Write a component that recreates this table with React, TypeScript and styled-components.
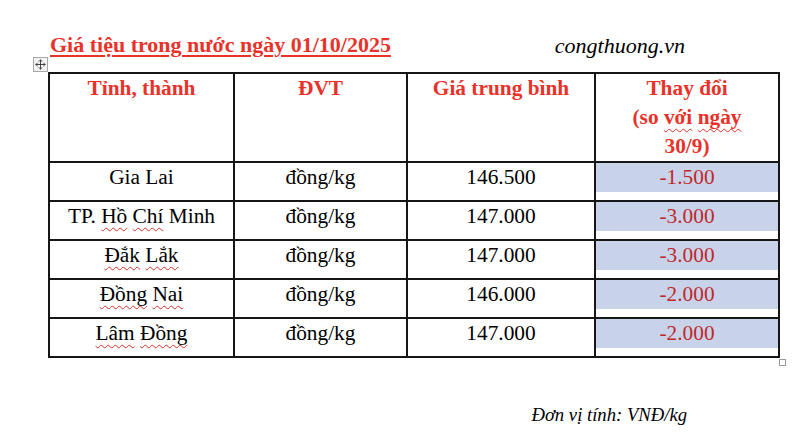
import { FC } from 'react';
import styled, { createGlobalStyle } from 'styled-components';
import { Move } from 'lucide-react';

const GlobalStyle = createGlobalStyle`
  html, body {
    margin: 0;
    padding: 0;
    background: #fff;
  }
  body {
    font-family: 'Liberation Serif', 'Times New Roman', serif;
    color: #000;
  }
`;

const Page = styled.div`
  width: 800px;
  height: 436px;
  box-sizing: border-box;
  padding: 30px 0 0 48px;
`;

const TitleRow = styled.div`
  display: flex;
  align-items: baseline;
  justify-content: space-between;
  width: 635px;
  padding-left: 2px;
  line-height: 29px;
`;

const Title = styled.h1`
  margin: 0;
  font-size: 22px;
  font-weight: bold;
  color: #e8322a;
  text-decoration: underline;
  text-decoration-thickness: 2px;
  text-underline-offset: 3px;
`;

const Source = styled.span`
  font-size: 22px;
  font-style: italic;
  position: relative;
  top: 1px;
`;

const TableArea = styled.div`
  position: relative;
  margin-top: 13px;
  width: 730px;
`;

const MoveHandle = styled.div`
  position: absolute;
  left: -15px;
  top: -15px;
  width: 13px;
  height: 13px;
  border: 1px solid #a8a8a8;
  background: #f3f3f3;
  display: flex;
  align-items: center;
  justify-content: center;
  color: #333;
`;

const ResizeHandle = styled.div`
  position: absolute;
  right: -8px;
  bottom: -8px;
  width: 5px;
  height: 5px;
  border: 1px solid #9a9a9a;
  background: #fff;
`;

const PriceTable = styled.table`
  width: 730px;
  table-layout: fixed;
  border-collapse: collapse;
  font-size: 21.33px;
  line-height: 29px;
`;

const HeadCell = styled.th`
  border: 2px solid #161616;
  padding: 0;
  height: 86px;
  vertical-align: top;
  text-align: center;
  font-weight: bold;
  color: #e8322a;
`;

const Cell = styled.td`
  border: 2px solid #161616;
  padding: 0 0 8px;
  vertical-align: top;
  text-align: center;
`;

const Shaded = styled.div`
  background: #c8d3ea;
  color: #c0282a;
`;

const Misspelt = styled.span`
  text-decoration: underline wavy #d9302a;
  text-decoration-thickness: 1px;
  text-underline-offset: 4px;
  text-decoration-skip-ink: none;
`;

const Footer = styled.div`
  width: 639px;
  margin-top: 46px;
  text-align: right;
  font-size: 18.67px;
  font-style: italic;
`;

interface Row {
  place: React.ReactNode;
  price: string;
  change: string;
}

const rows: Row[] = [
  { place: 'Gia Lai', price: '146.500', change: '-1.500' },
  {
    place: (
      <>
        TP. <Misspelt>Hồ</Misspelt> <Misspelt>Chí</Misspelt> Minh
      </>
    ),
    price: '147.000',
    change: '-3.000',
  },
  {
    place: (
      <>
        <Misspelt>Đắk</Misspelt> <Misspelt>Lắk</Misspelt>
      </>
    ),
    price: '147.000',
    change: '-3.000',
  },
  {
    place: (
      <>
        <Misspelt>Đồng</Misspelt> <Misspelt>Nai</Misspelt>
      </>
    ),
    price: '146.000',
    change: '-2.000',
  },
  {
    place: (
      <>
        <Misspelt>Lâm</Misspelt> <Misspelt>Đồng</Misspelt>
      </>
    ),
    price: '147.000',
    change: '-2.000',
  },
];

const App: FC = () => {
  return (
    <Page>
      <GlobalStyle />
      <TitleRow>
        <Title>Giá tiệu trong nước ngày 01/10/2025</Title>
        <Source>congthuong.vn</Source>
      </TitleRow>
      <TableArea>
        <MoveHandle>
          <Move size={11} strokeWidth={2} />
        </MoveHandle>
        <PriceTable>
          <colgroup>
            <col style={{ width: 185 }} />
            <col style={{ width: 173 }} />
            <col style={{ width: 188 }} />
            <col style={{ width: 184 }} />
          </colgroup>
          <thead>
            <tr>
              <HeadCell>Tỉnh, thành</HeadCell>
              <HeadCell>ĐVT</HeadCell>
              <HeadCell>Giá trung bình</HeadCell>
              <HeadCell>
                Thay đổi
                <br /> (so <Misspelt>với</Misspelt> <Misspelt>ngày</Misspelt>
                <br />
                30/9)
              </HeadCell>
            </tr>
          </thead>
          <tbody>
            {rows.map((row) => (
              <tr key={row.price + row.change + String(row.place)}>
                <Cell>{row.place}</Cell>
                <Cell>đồng/kg</Cell>
                <Cell>{row.price}</Cell>
                <Cell>
                  <Shaded>{row.change}</Shaded>
                </Cell>
              </tr>
            ))}
          </tbody>
        </PriceTable>
        <ResizeHandle />
      </TableArea>
      <Footer>Đơn vị tính: VNĐ/kg</Footer>
    </Page>
  );
};

export default App;
